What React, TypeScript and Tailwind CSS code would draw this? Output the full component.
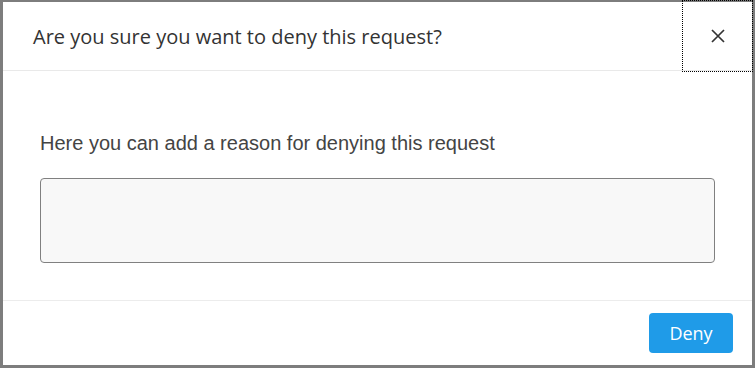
import React from 'react';

const App: React.FC = () => {
  return (
    <div className="w-[755px] h-[368px] bg-[#7d7d7d] pt-[2px] pl-[3px] pr-[3px] pb-[3px] flex overflow-hidden">
      {/* Modal */}
      <div className="flex-1 bg-white flex flex-col">
        {/* Header */}
        <div className="h-[69px] border-b border-[#e9e9e9] flex justify-between">
          <h2 className="pl-[30px] pt-[21px] text-[20px] leading-[28px] text-[#333] font-['Open_Sans',sans-serif]">
            Are you sure you want to deny this request?
          </h2>
          <button className="w-[69px] h-[70px] -mt-[1px] outline outline-1 outline-dotted outline-black flex items-center justify-center text-[#333]">
            <svg width="16" height="16" viewBox="0 0 16 16" fill="none" stroke="currentColor" strokeWidth="1.7">
              <path d="M2 2 L14 14 M14 2 L2 14" />
            </svg>
          </button>
        </div>

        {/* Body */}
        <div className="flex-1 px-[37px] pt-[59px] pb-[37px] border-b border-[#ececec] flex flex-col">
          <p className="text-[20px] leading-[26px] text-[#444] font-['Liberation_Sans',Arial,sans-serif] mb-[22px]">
            Here you can add a reason for denying this request
          </p>
          <textarea className="h-[85px] w-full resize-none rounded-[4px] border border-[#808080] bg-[#f8f8f8]" />
        </div>

        {/* Footer */}
        <div className="h-[64px] flex items-center justify-end pr-[19px]">
          <button className="w-[84px] h-[40px] rounded-[4px] bg-[#1f9be8] text-white text-[18px] font-['Open_Sans',sans-serif]">
            Deny
          </button>
        </div>
      </div>
    </div>
  );
};

export default App;
